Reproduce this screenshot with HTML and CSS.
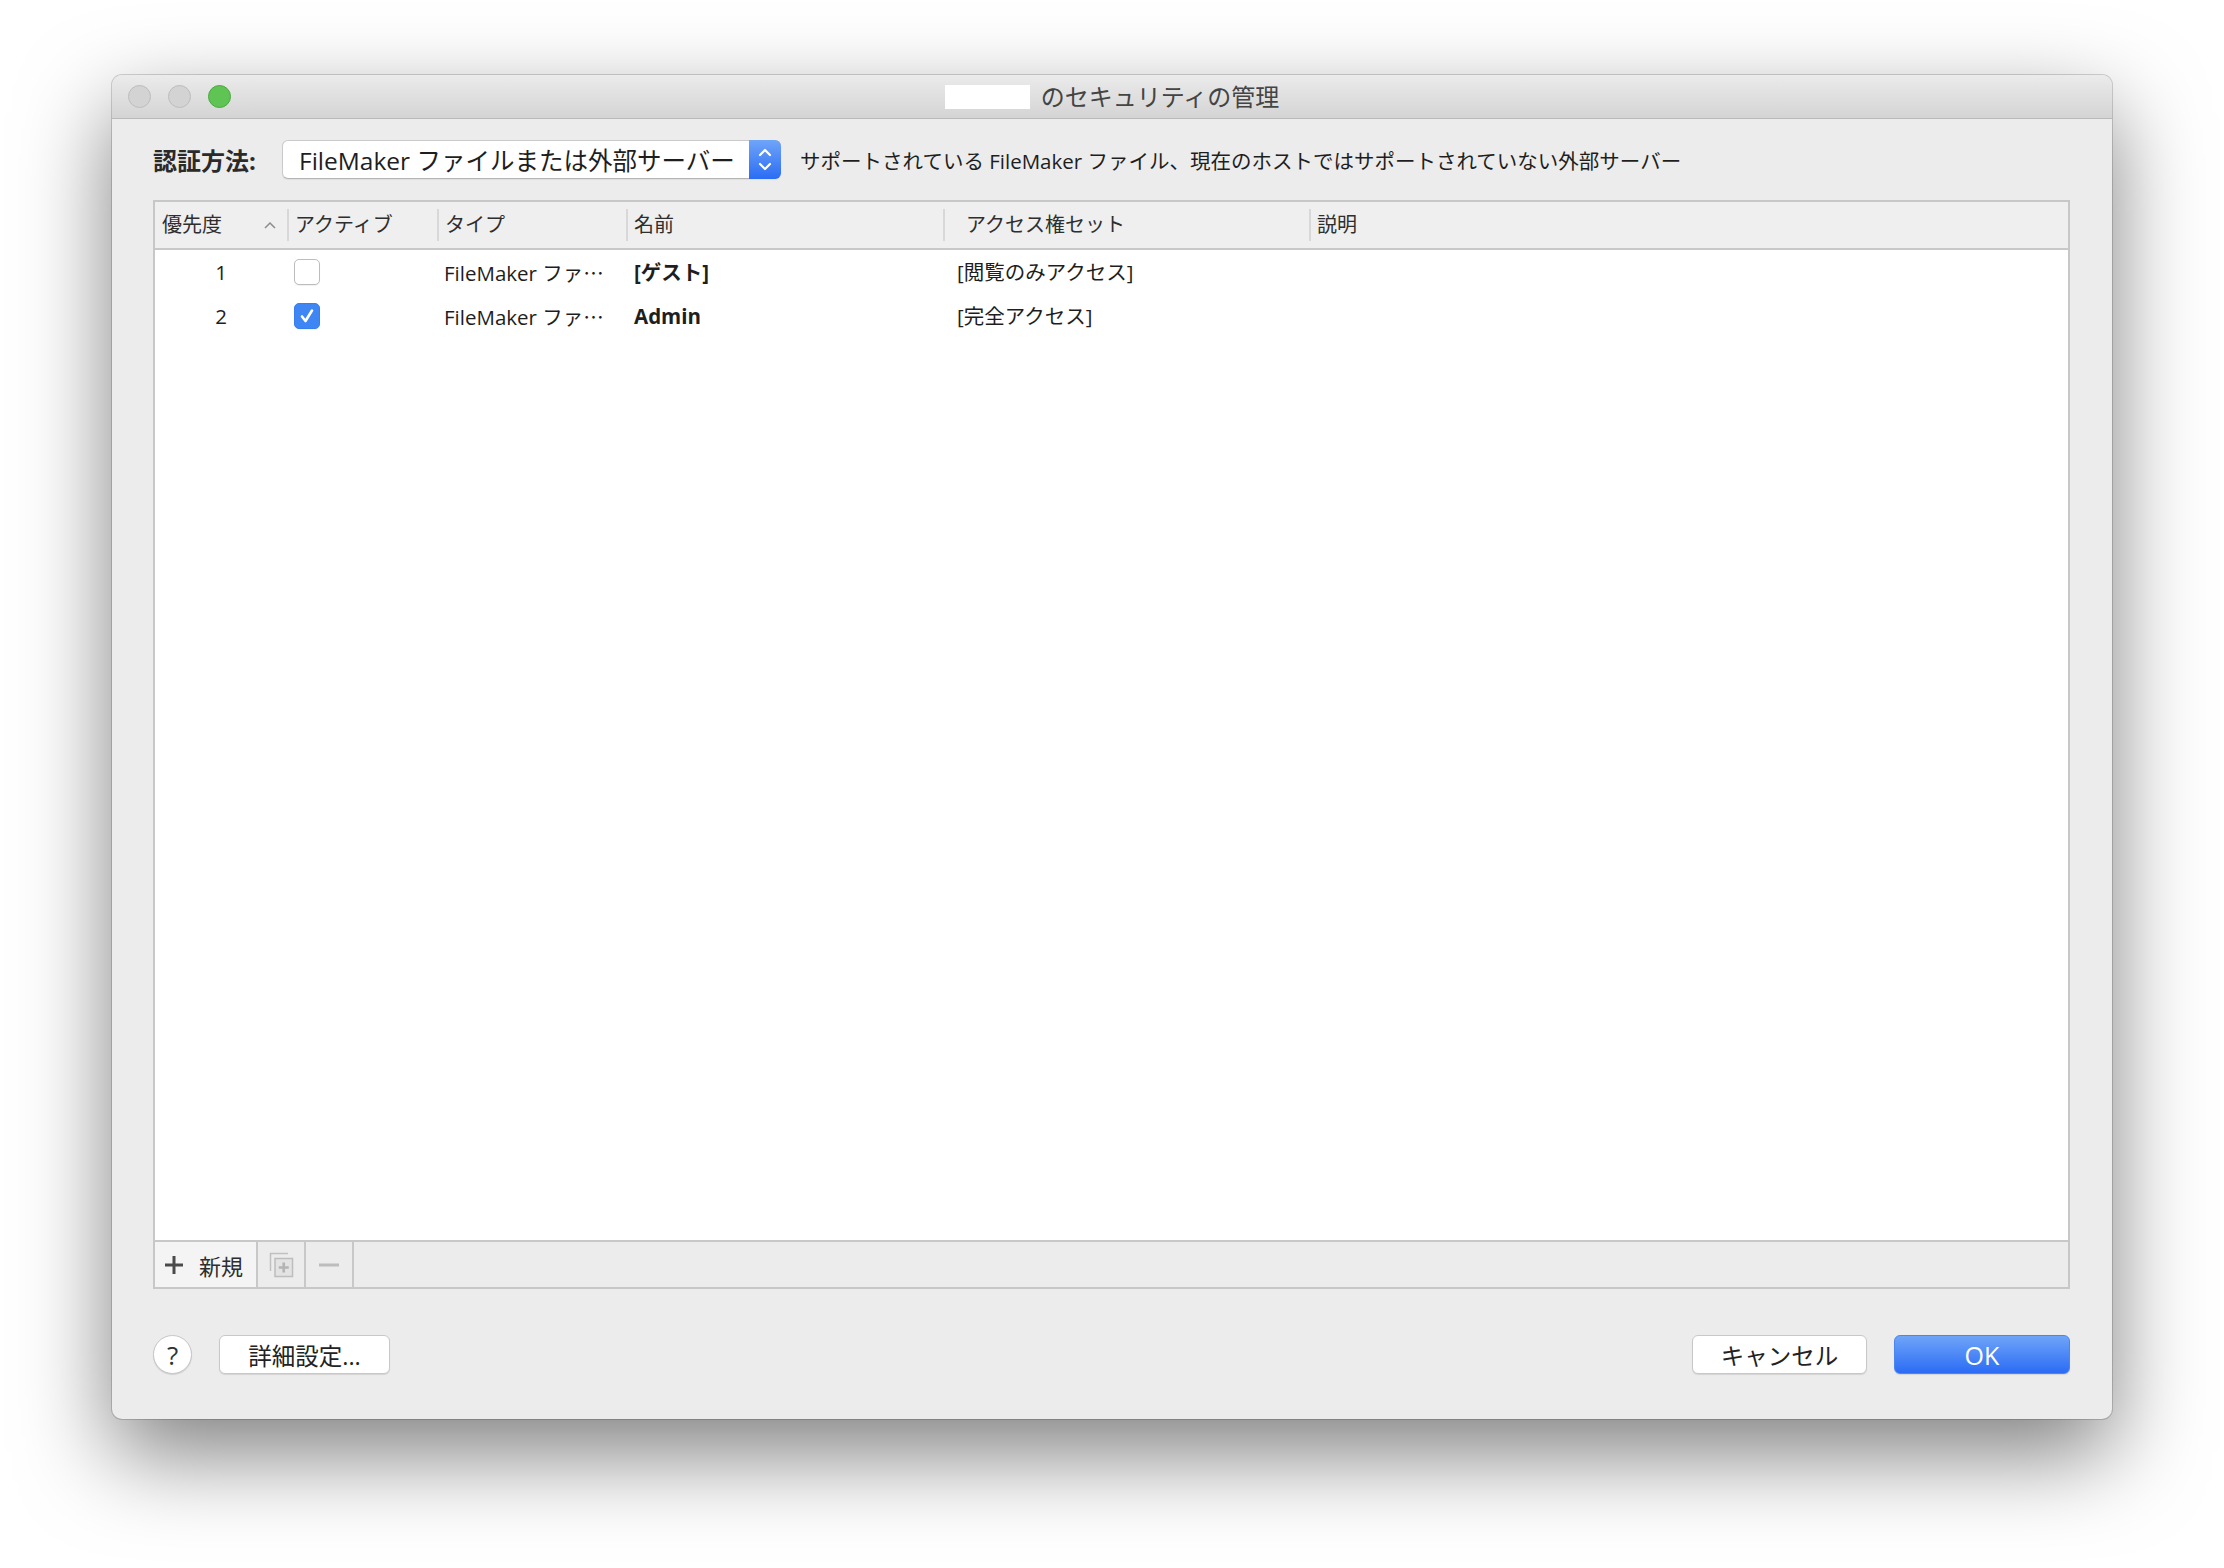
FILE: index.html
```html
<!DOCTYPE html>
<html lang="ja">
<head>
    <meta charset="UTF-8">
    <title>セキュリティの管理</title>
    <link rel="stylesheet" href="styles.css">
</head>
<body>
    <div class="window">
        <div class="titlebar">
            <div class="lights">
                <span class="light"></span>
                <span class="light"></span>
                <span class="light green"></span>
            </div>
            <div class="title"><span class="file-name"></span>のセキュリティの管理</div>
            <div></div>
        </div>

        <div class="content">
            <div class="auth-row">
                <span class="auth-label">認証方法:</span>
                <div class="popup">
                    <span>FileMaker ファイルまたは外部サーバー</span>
                    <span class="stepper">
                        <svg width="32" height="39" viewBox="0 0 32 39"><path d="M11 15 L16 10 L21 15 M11 24 L16 29 L21 24" fill="none" stroke="#fff" stroke-width="2.2" stroke-linecap="round" stroke-linejoin="round"/></svg>
                    </span>
                </div>
                <span class="auth-note">サポートされている FileMaker ファイル、現在のホストではサポートされていない外部サーバー</span>
            </div>

            <div class="accounts">
                <div class="head-row">
                    <div class="hcell first">優先度
                        <svg class="sort" width="12" height="8" viewBox="0 0 12 8"><path d="M1 7 L6 2 L11 7" fill="none" stroke="#8c8c8c" stroke-width="1.5"/></svg>
                    </div>
                    <div class="hcell sep">アクティブ</div>
                    <div class="hcell sep">タイプ</div>
                    <div class="hcell sep">名前</div>
                    <div class="hcell sep access">アクセス権セット</div>
                    <div class="hcell sep">説明</div>
                </div>

                <div class="rows">
                    <div class="row">
                        <div class="num">1</div>
                        <div class="check-cell"><span class="checkbox"></span></div>
                        <div class="cell">FileMaker ファ<span class="ell">…</span></div>
                        <div class="cell name">[ゲスト]</div>
                        <div class="cell access">[閲覧のみアクセス]</div>
                        <div class="cell"></div>
                    </div>
                    <div class="row">
                        <div class="num">2</div>
                        <div class="check-cell">
                            <span class="checkbox on">
                                <svg width="24" height="24" viewBox="0 0 24 24"><path d="M7 12.5 L10.5 17 L17 6.5" fill="none" stroke="#fff" stroke-width="2.6" stroke-linecap="round" stroke-linejoin="round"/></svg>
                            </span>
                        </div>
                        <div class="cell">FileMaker ファ<span class="ell">…</span></div>
                        <div class="cell name">Admin</div>
                        <div class="cell access">[完全アクセス]</div>
                        <div class="cell"></div>
                    </div>
                </div>

                <div class="toolbar">
                    <div class="tool-btn tool-new">
                        <svg width="20" height="20" viewBox="0 0 20 20"><path d="M10 1 V19 M1 10 H19" stroke="#4a4a4a" stroke-width="3"/></svg>
                        <span>新規</span>
                    </div>
                    <div class="tool-btn">
                        <svg width="25" height="26" viewBox="0 0 25 26">
                            <path d="M1.5 19 V1.5 H19" fill="none" stroke="#c0c0c0" stroke-width="1.5"/>
                            <rect x="6" y="6.5" width="17.5" height="18" fill="#e3e3e3" stroke="#bdbdbd" stroke-width="1.5"/>
                            <path d="M14.75 10.5 V20.5 M9.75 15.5 H19.75" stroke="#b4b4b4" stroke-width="2.6"/>
                        </svg>
                    </div>
                    <div class="tool-btn">
                        <svg width="20" height="4" viewBox="0 0 20 4"><path d="M0 2 H20" stroke="#bdbdbd" stroke-width="3"/></svg>
                    </div>
                </div>
            </div>

            <div class="footer">
                <button class="help">?</button>
                <button class="btn btn-detail">詳細設定...</button>
                <div class="spacer"></div>
                <button class="btn btn-cancel">キャンセル</button>
                <button class="btn btn-ok">OK</button>
            </div>
        </div>
    </div>
</body>
</html>
```

FILE: styles.css
```css
html, body {
    margin: 0;
    background: #fff;
}
body {
    min-height: 1568px;
    overflow: hidden;
    font-family: "Open Sans", "Noto Sans CJK JP", sans-serif;
    color: #222;
}
.window {
    width: 2000px;
    height: 1344px;
    margin: 75px 0 0 112px;
    background: #ececec;
    border-radius: 10px;
    box-shadow: 0 0 0 1px rgba(0,0,0,0.16), 0 35px 90px rgba(0,0,0,0.5);
    display: flex;
    flex-direction: column;
    overflow: hidden;
}
.titlebar {
    height: 43px;
    border-bottom: 1px solid #b9b9b9;
    background: linear-gradient(#ebebeb, #d4d4d4);
    display: grid;
    grid-template-columns: 1fr auto 1fr;
    align-items: center;
}
.lights {
    display: flex;
    gap: 17px;
    padding-left: 16px;
}
.light {
    width: 23px;
    height: 23px;
    box-sizing: border-box;
    border-radius: 50%;
    background: #d3d3d3;
    border: 1px solid #bcbcbc;
}
.light.green {
    background: #60c454;
    border-color: #4ba83f;
}
.title {
    display: flex;
    align-items: center;
    font-size: 24px;
    color: #444;
    line-height: 30px;
}
.file-name {
    width: 85px;
    height: 24px;
    background: #fff;
    margin-right: 11px;
}
.content {
    flex: 1;
    display: flex;
    flex-direction: column;
    padding: 21px 42px 45px 41px;
}
.auth-row {
    display: flex;
    align-items: center;
    height: 39px;
}
.auth-label {
    width: 129px;
    font-size: 24px;
    font-weight: bold;
    color: #2a2a2a;
}
.popup {
    width: 499px;
    height: 39px;
    box-sizing: border-box;
    border: 1px solid #cacaca;
    border-bottom-color: #b4b4b4;
    border-radius: 6px;
    background: #fff;
    display: flex;
    align-items: center;
    justify-content: space-between;
    padding-left: 16px;
    font-size: 24.5px;
    color: #1e1e1e;
    box-shadow: 0 1px 1px rgba(0,0,0,0.06);
}
.stepper {
    width: 32px;
    height: 39px;
    margin-right: -1px;
    border-radius: 0 6px 6px 0;
    background: linear-gradient(#6fa5f8, #2b6cf4);
    display: flex;
}
.auth-note {
    margin-left: 19px;
    font-size: 20.5px;
    color: #1e1e1e;
}
.accounts {
    margin-top: 21px;
    flex: 1;
    border: 2px solid #c7c7c7;
    background: #fff;
    display: flex;
    flex-direction: column;
}
.head-row, .row {
    display: grid;
    grid-template-columns: 132px 150px 189px 317px 366px 1fr;
}
.head-row {
    height: 46px;
    line-height: 44px;
    background: #efefef;
    border-bottom: 2px solid #c8c8c8;
    font-size: 20px;
    color: #2e2e2e;
}
.hcell {
    position: relative;
    display: flex;
    align-items: center;
    padding-left: 8px;
}
.hcell.first {
    padding-left: 7px;
    padding-right: 11px;
    justify-content: space-between;
}
.hcell.sep::before {
    content: "";
    position: absolute;
    left: 0;
    top: 7px;
    bottom: 7px;
    width: 2px;
    background: #d8d8d8;
}
.hcell.access {
    padding-left: 23px;
}
.rows {
    flex: 1;
}
.row {
    height: 44px;
    line-height: 42px;
    align-items: center;
    font-size: 20.5px;
    color: #1e1e1e;
}
.num {
    text-align: center;
}
.check-cell {
    padding-left: 7px;
}
.checkbox {
    display: block;
    width: 26px;
    height: 26px;
    box-sizing: border-box;
    border: 1px solid #bcbcbc;
    border-radius: 5px;
    background: #fff;
    box-shadow: 0 1px 1px rgba(0,0,0,0.06);
}
.checkbox.on {
    background: #3f86f5;
    border-color: #3a7eee;
}
.checkbox svg {
    display: block;
}
.cell {
    padding-left: 7px;
    white-space: nowrap;
    overflow: hidden;
}
.ell {
    font-family: "Noto Sans CJK JP", sans-serif;
}
.cell.name {
    padding-left: 8px;
    font-weight: bold;
}
.cell.access {
    padding-left: 14px;
}
.toolbar {
    height: 45px;
    border-top: 2px solid #c8c8c8;
    background: #ececec;
    display: flex;
}
.tool-btn {
    width: 48px;
    box-sizing: border-box;
    border-right: 2px solid #c8c8c8;
    display: flex;
    align-items: center;
    justify-content: center;
}
.tool-new {
    width: 103px;
    justify-content: flex-start;
    gap: 15px;
    padding-left: 9px;
    background: #f4f4f4;
    font-size: 22px;
    color: #2e2e2e;
}
.footer {
    margin-top: 46px;
    height: 39px;
    display: flex;
    align-items: center;
}
.help {
    width: 39px;
    height: 39px;
    padding: 0;
    border-radius: 50%;
    border: 1px solid #c6c6c6;
    background: #fff;
    box-shadow: 0 1px 1px rgba(0,0,0,0.12);
    font-family: inherit;
    font-size: 26px;
    color: #333;
    line-height: 1;
}
.btn {
    height: 39px;
    box-sizing: border-box;
    border: 1px solid #c8c8c8;
    border-radius: 6px;
    background: #fff;
    box-shadow: 0 1px 1px rgba(0,0,0,0.1);
    font-family: inherit;
    font-size: 23.5px;
    color: #222;
    padding: 0;
}
.btn-detail {
    width: 171px;
    margin-left: 27px;
}
.spacer {
    flex: 1;
}
.btn-cancel {
    width: 175px;
}
.btn-ok {
    width: 176px;
    margin-left: 27px;
    background: linear-gradient(#6fa4f8, #2b6cf5);
    border-color: #4a86f0;
    color: #fff;
    font-size: 25px;
}
```
